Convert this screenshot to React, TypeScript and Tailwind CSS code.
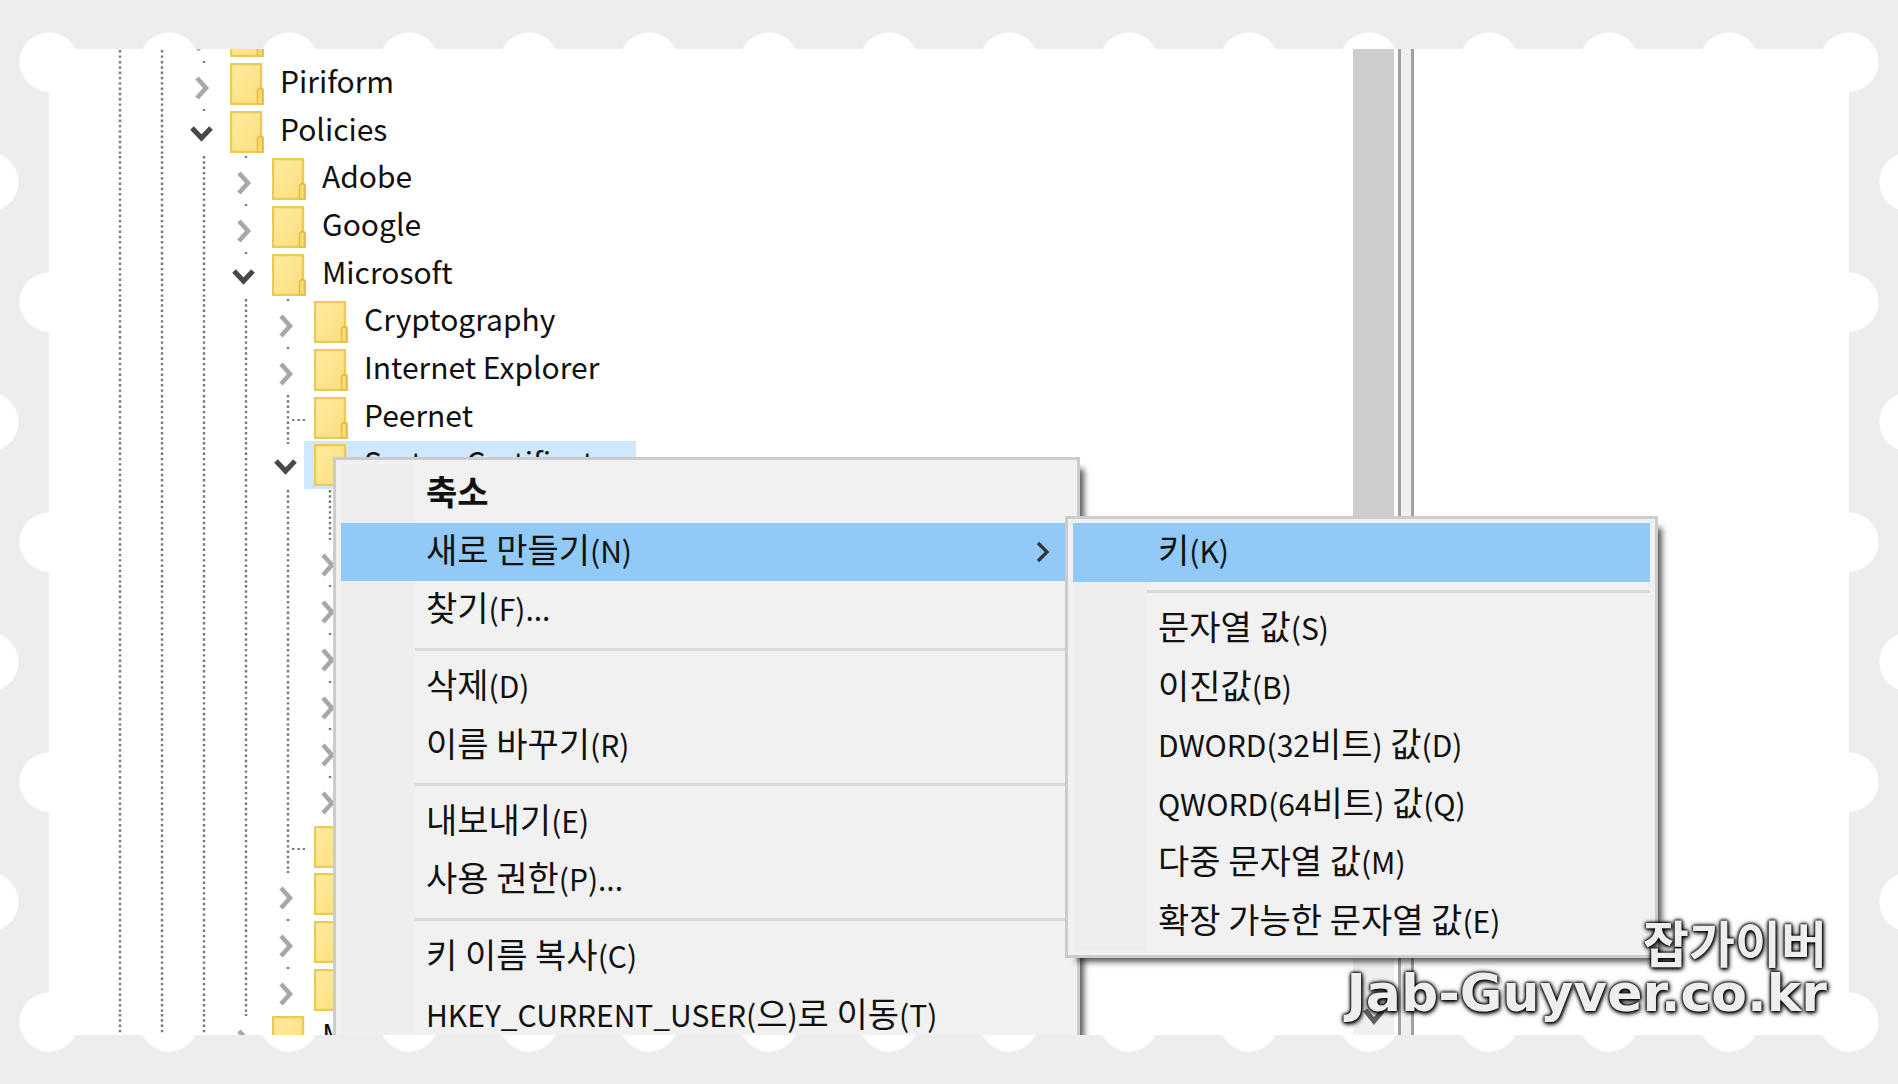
import { clsx } from 'clsx'

type Cell = 'line' | 'closed' | 'open' | 'leaf'

interface TreeRow {
  cells: Cell[]
  label?: string
  selected?: boolean
}

interface MenuEntry {
  label?: string
  separator?: boolean
  bold?: boolean
  active?: boolean
  arrow?: boolean
}

const rows: TreeRow[] = [
  { cells: ['line', 'line', 'closed'] },
  { cells: ['line', 'line', 'closed'], label: 'Piriform' },
  { cells: ['line', 'line', 'open'], label: 'Policies' },
  { cells: ['line', 'line', 'line', 'closed'], label: 'Adobe' },
  { cells: ['line', 'line', 'line', 'closed'], label: 'Google' },
  { cells: ['line', 'line', 'line', 'open'], label: 'Microsoft' },
  { cells: ['line', 'line', 'line', 'line', 'closed'], label: 'Cryptography' },
  { cells: ['line', 'line', 'line', 'line', 'closed'], label: 'Internet Explorer' },
  { cells: ['line', 'line', 'line', 'line', 'leaf'], label: 'Peernet' },
  { cells: ['line', 'line', 'line', 'line', 'open'], label: 'SystemCertificates', selected: true },
  { cells: ['line', 'line', 'line', 'line', 'line', 'leaf'] },
  { cells: ['line', 'line', 'line', 'line', 'line', 'closed'] },
  { cells: ['line', 'line', 'line', 'line', 'line', 'closed'] },
  { cells: ['line', 'line', 'line', 'line', 'line', 'closed'] },
  { cells: ['line', 'line', 'line', 'line', 'line', 'closed'] },
  { cells: ['line', 'line', 'line', 'line', 'line', 'closed'] },
  { cells: ['line', 'line', 'line', 'line', 'line', 'closed'] },
  { cells: ['line', 'line', 'line', 'line', 'leaf'] },
  { cells: ['line', 'line', 'line', 'line', 'closed'] },
  { cells: ['line', 'line', 'line', 'line', 'closed'] },
  { cells: ['line', 'line', 'line', 'line', 'closed'] },
  { cells: ['line', 'line', 'line', 'closed'], label: 'M' },
]

const contextMenu: MenuEntry[] = [
  { label: '축소', bold: true },
  { label: '새로 만들기(N)', active: true, arrow: true },
  { label: '찾기(F)...' },
  { separator: true },
  { label: '삭제(D)' },
  { label: '이름 바꾸기(R)' },
  { separator: true },
  { label: '내보내기(E)' },
  { label: '사용 권한(P)...' },
  { separator: true },
  { label: '키 이름 복사(C)' },
  { label: 'HKEY_CURRENT_USER(으)로 이동(T)' },
]

const newMenu: MenuEntry[] = [
  { label: '키(K)', active: true },
  { separator: true },
  { label: '문자열 값(S)' },
  { label: '이진값(B)' },
  { label: 'DWORD(32비트) 값(D)' },
  { label: 'QWORD(64비트) 값(Q)' },
  { label: '다중 문자열 값(M)' },
  { label: '확장 가능한 문자열 값(E)' },
]

function FolderIcon() {
  return (
    <svg className="h-[42px] w-[34px] shrink-0" viewBox="0 0 34 42" fill="none" aria-hidden="true">
      <defs>
        <linearGradient id="folder" x1="0" y1="0" x2="1" y2="1">
          <stop offset="0" stopColor="#ffeaa0" />
          <stop offset="1" stopColor="#fbdf7c" />
        </linearGradient>
      </defs>
      <path d="M1 1H31V25L33 27V41H1Z" fill="url(#folder)" stroke="#ecca58" strokeWidth="2.4" />
      <path d="M27.5 41V27.5L30 25L32.5 27.5V41Z" fill="#fbdc70" stroke="#e3bd4b" strokeWidth="1.6" />
    </svg>
  )
}

// One indent step: dotted connector and, where the key has children, its chevron
function GuideCell({ kind }: { kind: Cell }) {
  const expander = kind === 'closed' || kind === 'open'
  const drawing = (
    <svg className="h-12 w-[42px]" viewBox="0 0 42 48" fill="none" aria-hidden="true">
      <path
        d={expander ? 'M21 1V3' : 'M21 1V48'}
        stroke="#787878"
        strokeWidth="2.4"
        strokeDasharray="2.4 2.9"
      />
      {kind === 'leaf' && <path d="M25 26H38" stroke="#787878" strokeWidth="2.2" strokeDasharray="2.4 3" />}
      {kind === 'closed' && <path d="M14 18L23 28L14 38" stroke="#a8a8a8" strokeWidth="4.6" />}
      {kind === 'open' && <path d="M9 20L18.5 30L28 20" stroke="#484848" strokeWidth="5" />}
    </svg>
  )
  if (!expander) return <span className="h-full w-[42px] shrink-0 overflow-hidden">{drawing}</span>
  return (
    <button
      type="button"
      aria-label={kind === 'open' ? 'Collapse' : 'Expand'}
      className="h-full w-[42px] shrink-0 overflow-hidden"
    >
      {drawing}
    </button>
  )
}

function Tree() {
  return (
    <ul className="-mt-[37px] -mb-[26px] pl-[50px]">
      {rows.map((row, i) => (
        <li key={i} className="flex h-12 items-center nth-[3n]:h-[47px]">
          {row.cells.map((cell, j) => (
            <GuideCell key={j} kind={cell} />
          ))}
          <span
            className={clsx(
              '-ml-[5px] flex h-full items-center gap-4 pr-3 pl-[10px]',
              row.selected && 'bg-[#cde8ff]',
            )}
          >
            <FolderIcon />
            {row.label && <span className="pb-2 text-[30px] leading-[40px] text-[#111]">{row.label}</span>}
          </span>
        </li>
      ))}
    </ul>
  )
}

// Latin runs are set a little smaller than the Hangul around them
function MenuLabel({ text }: { text: string }) {
  const runs = text.match(/[\x21-\x7e]+|[^\x21-\x7e]+/g) ?? []
  return (
    <span className="flex-1 pb-[6px]">
      {runs.map((run, i) => (
        <span key={i} className={/^[\x21-\x7e]/.test(run) ? 'text-[30px]' : 'text-[34px]'}>
          {run}
        </span>
      ))}
    </span>
  )
}

function Menu({ entries, label, className }: { entries: MenuEntry[]; label: string; className: string }) {
  return (
    <ul
      role="menu"
      aria-label={label}
      className={clsx(
        'absolute border-[3px] border-[#cccccc] bg-[#f1f1f1] px-[5px] py-[4px] shadow-[8px_8px_6px_-4px_rgba(0,0,0,0.65)]',
        className,
      )}
    >
      {entries.map((entry, i) =>
        entry.separator ? (
          <li key={i} role="separator" className="flex h-[18px] items-center">
            <span className="h-full w-[74px] bg-[#eeeeee]" />
            <span className="h-[3px] flex-1 bg-[#d9d9d9]" />
          </li>
        ) : (
          <li key={i} role="none" className="h-[58px] odd:h-[59px]">
            <button
              type="button"
              role="menuitem"
              className={clsx(
                'flex h-full w-full items-center text-left text-[34px] leading-[48px] whitespace-nowrap text-[#111]',
                entry.active && 'bg-[#91c9f7]',
                entry.bold && 'font-bold',
              )}
            >
              <span className={clsx('mr-[11px] h-full w-[74px] shrink-0', !entry.active && 'bg-[#eeeeee]')} />
              <MenuLabel text={entry.label ?? ''} />
              {entry.arrow && (
                <svg className="mr-[22px] h-6 w-[14px]" viewBox="0 0 14 24" fill="none" aria-hidden="true">
                  <path d="M2 3L11 12L2 21" stroke="#333" strokeWidth="3.2" />
                </svg>
              )}
            </button>
          </li>
        ),
      )}
    </ul>
  )
}

function Scrollbar() {
  return (
    <div className="mr-1 flex w-[41px] flex-col bg-[#f0f0f0]">
      <div className="flex-3 bg-[#cdcdcd]" />
      <div className="flex-1" />
      <button type="button" aria-label="Scroll down" className="flex h-[38px] items-center justify-center">
        <svg className="h-[18px] w-[22px]" viewBox="0 0 22 18" fill="none" aria-hidden="true">
          <path d="M2 3L11 14L20 3" stroke="#606060" strokeWidth="5" />
        </svg>
      </button>
    </div>
  )
}

export default function App() {
  return (
    <div className="min-h-screen bg-[#ededed] bg-[radial-gradient(circle,#fff_29px,transparent_30px),radial-gradient(circle,#fff_29px,transparent_30px)] bg-size-[120px_240px] bg-position-[-11px_-58px,-71px_62px] p-[49px] font-['Noto_Sans_CJK_KR',sans-serif]">
      <main className="relative grid grid-cols-[3fr_auto_auto_1fr] overflow-hidden bg-white">
        <Tree />
        <Scrollbar />
        <div className="w-4 border-x-[3px] border-[#a0a0a5] bg-[#f0f0f2]" />
        <div />
        <Menu entries={contextMenu} label="키 메뉴" className="top-[408px] left-[284px] w-[747px]" />
        <Menu entries={newMenu} label="새로 만들기" className="top-[467px] left-[1016px] w-[593px]" />
        <div className="absolute right-[22px] bottom-[16px] text-right font-bold text-[#eeeeee] [text-shadow:0_0_2px_#000,0_0_3px_#000,0_0_5px_#000,1px_2px_5px_#000]">
          <p className="text-[50px] leading-[52px]">잡가이버</p>
          <p className="font-['DejaVu_Sans',sans-serif] text-[52px] leading-[52px]">Jab-Guyver.co.kr</p>
        </div>
      </main>
    </div>
  )
}
